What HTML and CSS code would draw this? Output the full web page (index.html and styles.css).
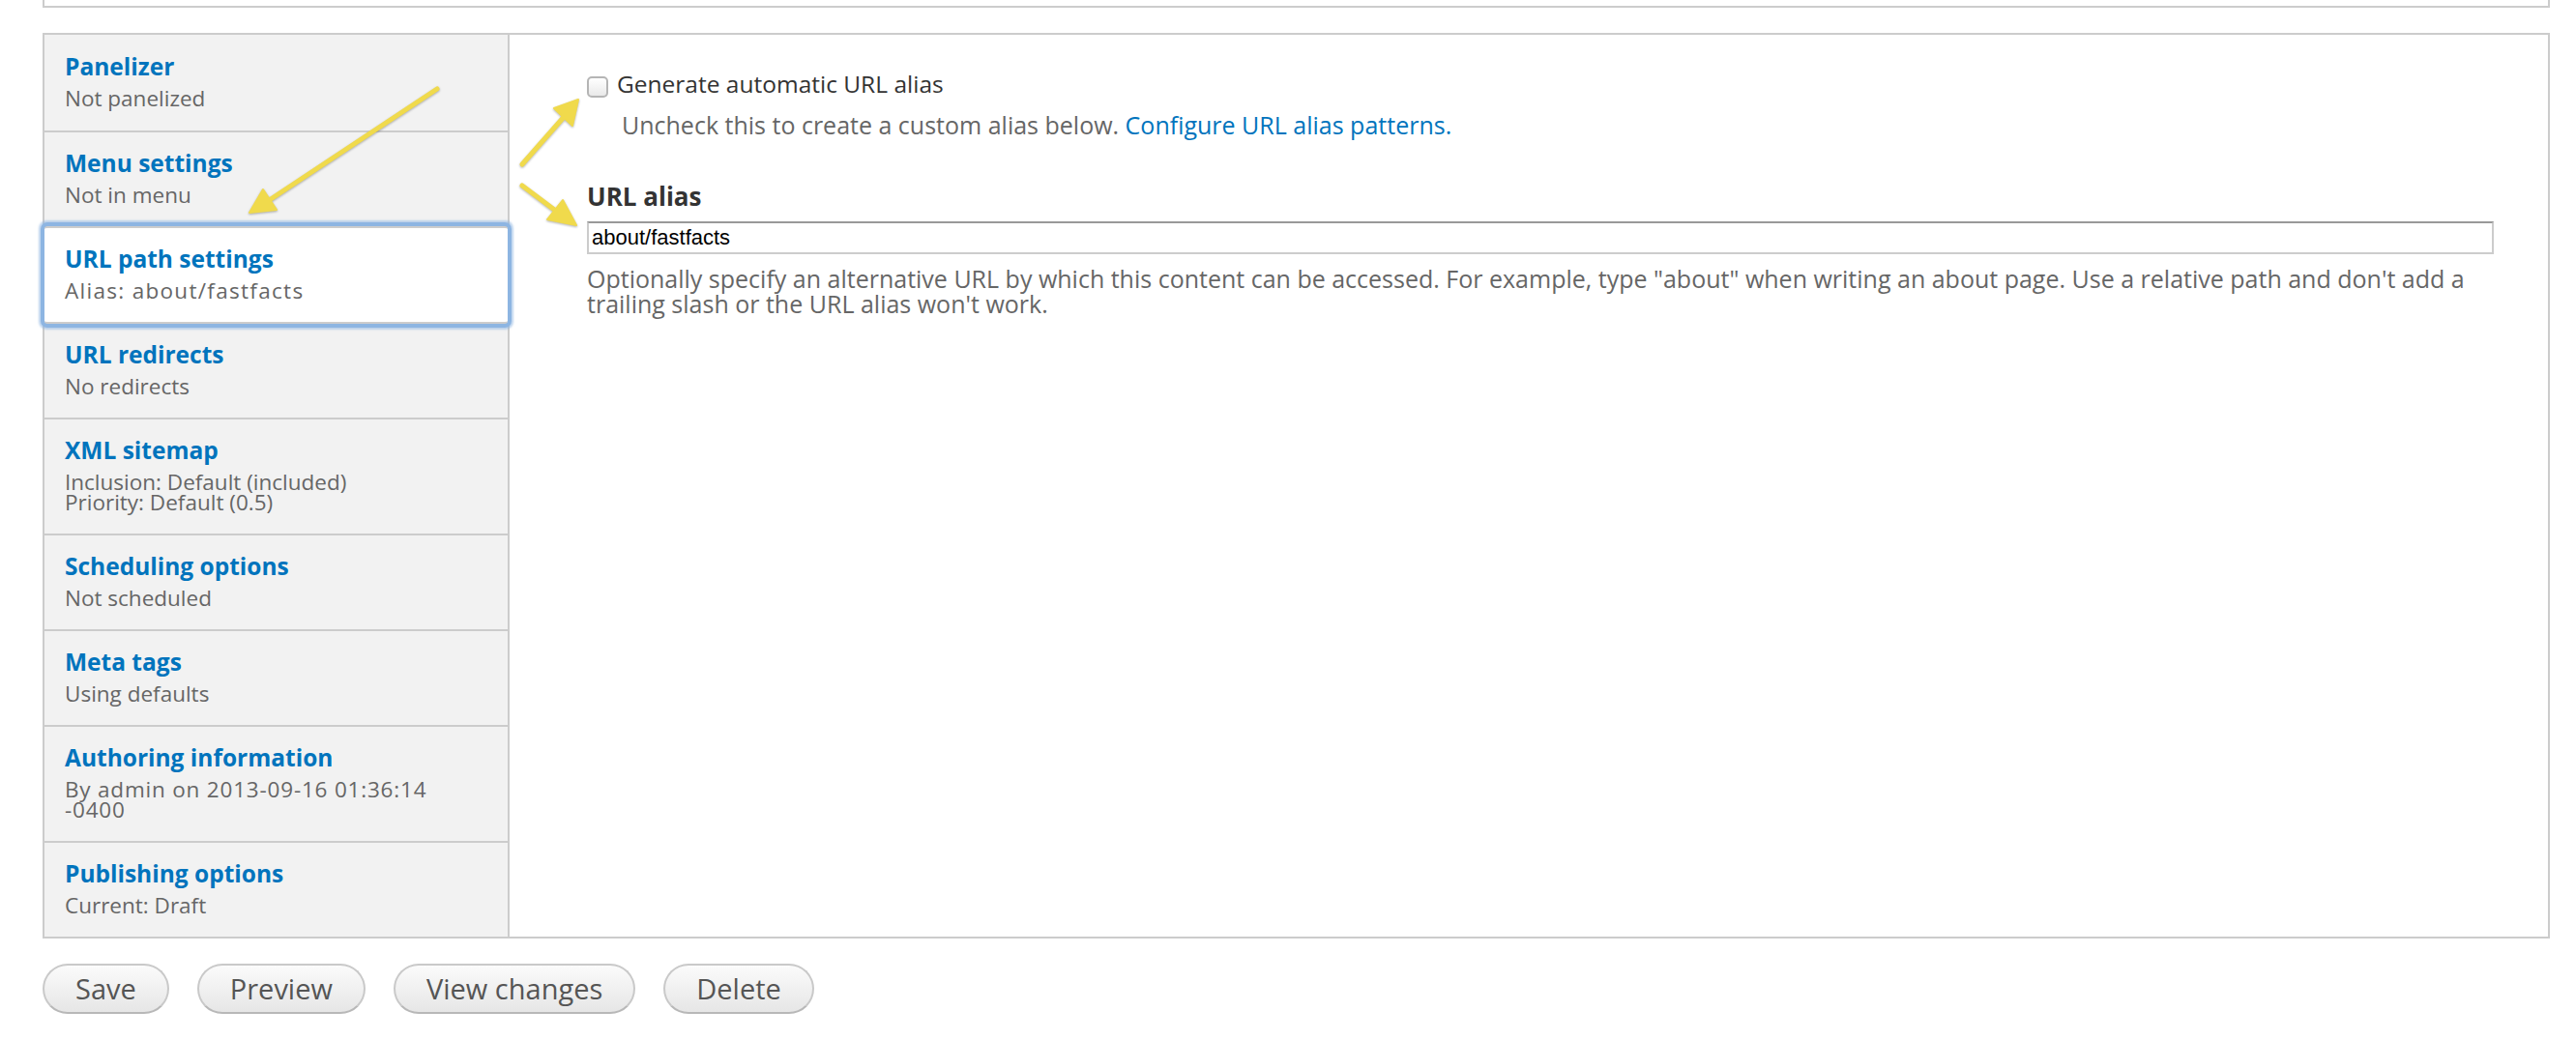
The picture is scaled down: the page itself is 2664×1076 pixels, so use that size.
FILE: index.html
```html
<!DOCTYPE html>
<html lang="en">
<head>
<meta charset="utf-8">
<title>Edit content</title>
<link rel="stylesheet" href="styles.css">
</head>
<body>
<div class="page">
  <div class="topbox"></div>

  <div class="vtabs">
    <ul class="tablist">
      <li class="tab first"><a class="tab-title">Panelizer</a><span class="summary">Not panelized</span></li>
      <li class="tab"><a class="tab-title">Menu settings</a><span class="summary">Not in menu</span></li>
      <li class="tab selected"><a class="tab-title">URL path settings</a><span class="summary summary-path">Alias: about/fastfacts</span></li>
      <li class="tab"><a class="tab-title">URL redirects</a><span class="summary">No redirects</span></li>
      <li class="tab"><a class="tab-title">XML sitemap</a><span class="summary">Inclusion: Default (included)<br>Priority: Default (0.5)</span></li>
      <li class="tab"><a class="tab-title">Scheduling options</a><span class="summary">Not scheduled</span></li>
      <li class="tab"><a class="tab-title">Meta tags</a><span class="summary">Using defaults</span></li>
      <li class="tab"><a class="tab-title">Authoring information</a><span class="summary summary-date">By admin on 2013-09-16 01:36:14<br>-0400</span></li>
      <li class="tab"><a class="tab-title">Publishing options</a><span class="summary">Current: Draft</span></li>
    </ul>

    <div class="pane">
      <div class="check-row">
        <input type="checkbox" class="checkbox" id="pathauto">
        <label class="check-label" for="pathauto">Generate automatic URL alias</label>
      </div>
      <div class="desc desc-check">Uncheck this to create a custom alias below. <a class="link">Configure URL alias patterns.</a></div>

      <label class="field-label" for="alias">URL alias</label>
      <input class="text-input" id="alias" type="text" value="about/fastfacts">
      <div class="desc desc-field">Optionally specify an alternative URL by which this content can be accessed. For example, type "about" when writing an about page. Use a relative path and don't add a trailing slash or the URL alias won't work.</div>
    </div>
  </div>

  <div class="actions">
    <button class="btn">Save</button>
    <button class="btn">Preview</button>
    <button class="btn">View changes</button>
    <button class="btn">Delete</button>
  </div>
</div>

<svg class="arrows" width="2664" height="1076" viewBox="0 0 2664 1076" aria-hidden="true">
  <g class="arrow" fill="#f0da4c" stroke="#f0da4c" stroke-linecap="round" stroke-linejoin="round">
    <line x1="452" y1="92" x2="277" y2="208" stroke-width="5"/>
    <polygon points="258,220 272,196 286,217" stroke-width="2"/>
    <line x1="540" y1="170" x2="584" y2="120" stroke-width="5"/>
    <polygon points="598,103 573,112 592,130" stroke-width="2"/>
    <line x1="540" y1="192" x2="576" y2="219" stroke-width="5"/>
    <polygon points="596,233 566,227 582,207" stroke-width="2"/>
  </g>
</svg>
</body>
</html>
```

FILE: styles.css
```css
html, body {
  margin: 0;
  padding: 0;
  background: #fff;
}

body {
  font-family: "Open Sans", "DejaVu Sans", sans-serif;
  color: #333;
  position: relative;
}

.page {
  padding: 0 27px 0 44px;
}

.topbox {
  height: 6px;
  border: 2px solid #ccc;
  border-top: none;
}

/* vertical tabs */
.vtabs {
  margin-top: 26px;
  display: flex;
  border: 2px solid #ccc;
}

.tablist {
  flex: none;
  width: 479px;
  margin: 0;
  padding: 0;
  list-style: none;
  background: #f2f2f2;
  border-right: 2px solid #ccc;
}

.tab {
  padding: 17px 20px 22px 21px;
  border-top: 2px solid #ccc;
}

.tab.first {
  border-top: none;
  padding-top: 18px;
  padding-bottom: 23px;
}

.tab.selected {
  position: relative;
  z-index: 1;
  background: #fff;
  border-bottom: 2px solid #ccc;
  margin-bottom: -2px;
  border-radius: 3px;
  box-shadow: 0 0 0 4px #8db5e2, 0 0 2px 6px rgba(141, 181, 226, 0.55);
}

.tab-title {
  display: block;
  font-size: 24.5px;
  line-height: 30px;
  font-weight: 700;
  color: #0074bd;
  margin-bottom: 7px;
}

.summary {
  display: block;
  font-size: 22.5px;
  line-height: 21px;
  color: #666;
}

.summary-path {
  letter-spacing: 1.3px;
}

.summary-date {
  letter-spacing: 0.8px;
}

/* pane */
.pane {
  flex: 1;
  min-width: 0;
  padding: 36px 56px 0 80px;
}

.check-row {
  display: flex;
  align-items: flex-start;
}

.checkbox {
  appearance: none;
  -webkit-appearance: none;
  flex: none;
  width: 22px;
  height: 22px;
  margin: 7px 9px 0 0;
  border: 2px solid #b5b5b5;
  border-radius: 5px;
  background: linear-gradient(#ffffff, #e9e9e9);
  box-sizing: border-box;
}

.check-label {
  font-size: 24.5px;
  line-height: 30px;
  color: #333;
}

.desc {
  color: #666;
}

.desc-check {
  margin: 12px 0 0 36px;
  font-size: 25px;
  line-height: 30px;
}

.link {
  color: #0074bd;
}

.field-label {
  display: block;
  margin-top: 44px;
  font-size: 26px;
  line-height: 30px;
  font-weight: 700;
  color: #333;
}

.text-input {
  display: block;
  box-sizing: border-box;
  width: 100%;
  height: 34px;
  margin: 11px 0 0;
  padding: 0 3px;
  border: 2px solid #ccc;
  border-top-color: #999;
  border-radius: 0;
  font-family: "Liberation Sans", Arial, sans-serif;
  font-size: 22px;
  color: #000;
  background: #fff;
  outline: none;
}

.desc-field {
  margin-top: 12px;
  font-size: 25px;
  line-height: 26px;
}

/* action buttons */
.actions {
  display: flex;
  gap: 29px;
  margin-top: 26px;
}

.btn {
  height: 52px;
  padding: 8px 32px;
  border: 2px solid #c9c9c9;
  border-bottom-color: #b8b8b8;
  border-radius: 26px;
  background: linear-gradient(#fbfbfb, #e6e6e6);
  font-family: "Open Sans", "DejaVu Sans", sans-serif;
  font-size: 29px;
  line-height: 32px;
  color: #555;
  box-sizing: border-box;
}

/* annotation arrows over the page */
.arrows {
  position: absolute;
  left: 0;
  top: 0;
  pointer-events: none;
  overflow: visible;
}

.arrow {
  filter: drop-shadow(0 1px 1px rgba(0, 0, 0, 0.3));
}
```
